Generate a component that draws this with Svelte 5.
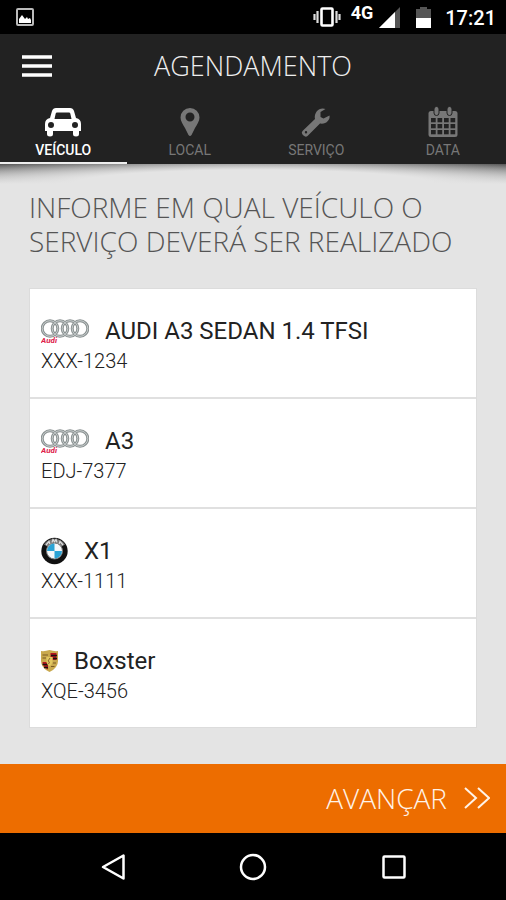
<script>
  const tabs = [
    { id: 'car', label: 'VEÍCULO' },
    { id: 'pin', label: 'LOCAL' },
    { id: 'wrench', label: 'SERVIÇO' },
    { id: 'calendar', label: 'DATA' }
  ];
  const vehicles = [
    { brand: 'audi', name: 'AUDI A3 SEDAN 1.4 TFSI', plate: 'XXX-1234' },
    { brand: 'audi', name: 'A3', plate: 'EDJ-7377' },
    { brand: 'bmw', name: 'X1', plate: 'XXX-1111' },
    { brand: 'porsche', name: 'Boxster', plate: 'XQE-3456' }
  ];
  const columns = [3, 9.5, 16, 22.5];
  const lines = [12, 18, 24];
  const rings = [9, 19, 29, 39];
  let active = $state('car');
</script>

<div class="screen">
  <div class="status">
    <svg class="picture" width="18" height="18" viewBox="0 0 18 18" aria-hidden="true">
      <rect x="1" y="1" width="16" height="16" rx="1" fill="none" stroke="#bbb" stroke-width="2" />
      <path d="M3 15V11L6 7L9 11L11 9L12 11L14 10L15 12V15Z" fill="#fff" />
    </svg>
    <div class="indicators">
      <svg width="28" height="20" viewBox="0 0 28 20" aria-hidden="true">
        <rect x="8.5" y="1.5" width="11" height="17" rx="1" fill="none" stroke="#fff" stroke-width="2.6" />
        <path d="M4.5 4V16M1.5 7V13M23.5 4V16M26.5 7V13" stroke="#ddd" stroke-width="2.2" />
      </svg>
      <span class="network">4G</span>
      <svg class="signal" width="22" height="21" viewBox="0 0 22 21" aria-hidden="true">
        <path d="M0 21L21 0V21Z" fill="#555" />
        <path d="M0 21L16 5V21Z" fill="#fff" />
      </svg>
      <svg class="battery" width="15" height="21" viewBox="0 0 15 21" aria-hidden="true">
        <path d="M0 2H4V0H11V2H15V11H0Z" fill="#555" />
        <path d="M0 11H15V21H0Z" fill="#fff" />
      </svg>
      <span class="clock">17:21</span>
    </div>
  </div>

  <header>
    <div class="bar">
      <button class="menu" aria-label="Menu">
        <svg width="30" height="22" viewBox="0 0 30 22">
          <path d="M0 2H30M0 11H30M0 20H30" stroke="#fff" stroke-width="3.6" />
        </svg>
      </button>
      <h1>AGENDAMENTO</h1>
    </div>
    <nav>
      {#each tabs as tab}
        <button class="tab" class:active={active === tab.id} onclick={() => (active = tab.id)}>
          {#if tab.id === 'car'}
            <svg width="36" height="32" viewBox="0 0 36 32" fill="currentColor">
              <path fill-rule="evenodd" d="M11 2H25Q28 2 29 5L31 12Q36 13 36 18V25H34V28Q34 30.500 31 30.500Q28 30.500 28 28V25H8V28Q8 30.500 5 30.500Q2 30.500 2 28V25H0V18Q0 13 5 12L7 5Q8 2 11 2ZM12 6.500Q11 6.500 10.700 7.500L9.500 13H26.500L25.300 7.500Q25 6.500 24 6.500ZM6 16A3 3 0 1 0 6 22A3 3 0 1 0 6 16ZM30 16A3 3 0 1 0 30 22A3 3 0 1 0 30 16Z" />
            </svg>
          {:else if tab.id === 'pin'}
            <svg width="20" height="32" viewBox="0 0 20 32" fill="currentColor">
              <path fill-rule="evenodd" d="M10 2A9.500 9.500 0 0 1 19.500 11.500C19.500 15 17 18.500 15 22L11.500 29Q10 31 8.500 29L5 22C3 18.500 .5 15 .5 11.500A9.500 9.500 0 0 1 10 2ZM10 6.500A4.500 4.500 0 1 0 10 15.500A4.500 4.500 0 1 0 10 6.500Z" />
            </svg>
          {:else if tab.id === 'wrench'}
            <svg width="30" height="32" viewBox="0 0 30 32" fill="currentColor">
              <path fill-rule="evenodd" d="M24.500 3L19.500 6V11L22.500 12.500L28.500 9.500C29.500 14 25 18.500 19 17.500L6.500 30Q4.500 31.500 2.500 29.500L1.500 28.500Q0 26.500 1.500 25L14 13C12.500 6 19 .5 24.500 3ZM5 25A1.200 1.200 0 1 0 5 27.400A1.200 1.200 0 1 0 5 25Z" />
            </svg>
          {:else}
            <svg width="30" height="32" viewBox="0 0 30 32" fill="currentColor">
              <path d="M3 5H27Q29.500 5 29.500 7.500V28.500Q29.500 31 27 31H3Q.5 31 .5 28.500V7.500Q.5 5 3 5Z" />
              <rect x="6" y="0.5" width="5" height="9" rx="2.500" fill="currentColor" stroke="#222" />
              <rect x="19" y="0.5" width="5" height="9" rx="2.500" fill="currentColor" stroke="#222" />
              {#each lines as y}
                {#each columns as x}
                  <rect {x} {y} width="4.700" height="4.300" fill="#222" />
                {/each}
              {/each}
            </svg>
          {/if}
          <span>{tab.label}</span>
        </button>
      {/each}
    </nav>
  </header>

  <main>
    <h2>INFORME EM QUAL VEÍCULO O SERVIÇO DEVERÁ SER REALIZADO</h2>
    <ul>
      {#each vehicles as vehicle}
        <li>
          <button class="vehicle">
            <span class="model">
              {#if vehicle.brand === 'audi'}
                <svg width="48" height="28" viewBox="0 0 48 28" aria-label="Audi">
                  <g fill="none" stroke="#8b9292" stroke-width="3">
                    {#each rings as cx}
                      <circle {cx} cy="11.500" r="7.800" />
                    {/each}
                  </g>
                  <g fill="none" stroke="#c6cccc" stroke-width="1">
                    {#each rings as cx}
                      <circle {cx} cy="11.500" r="7.800" />
                    {/each}
                  </g>
                  <text x="0" y="26" class="wordmark">Audi</text>
                </svg>
              {:else if vehicle.brand === 'bmw'}
                <svg width="27" height="28" viewBox="0 0 27 28" aria-label="BMW">
                  <circle cx="13.500" cy="14" r="13.200" fill="#111" />
                  <path d="M3 7.500A12.500 12.500 0 0 1 24 7.500L20 10A8 8 0 0 0 7 10Z" fill="#777" />
                  <path d="M5 8L8 4.500L9 7M11 5.500L12 2.500L13.500 5L15 2.500L16 5.500M18 7L19 4.500L22 8" fill="none" stroke="#ddd" stroke-width="1.200" />
                  <circle cx="13.500" cy="14" r="8" fill="#f6f8fa" stroke="#777" />
                  <path d="M13.500 14V6.500A7.500 7.500 0 0 0 6 14ZM13.500 14V21.500A7.500 7.500 0 0 0 21 14Z" fill="#2ba3d5" />
                </svg>
              {:else}
                <svg width="17" height="28" viewBox="0 0 17 28" aria-label="Porsche">
                  <path d="M0 4Q4 4.500 8.500 3Q13 4.500 17 4V14Q17 21 8.500 25Q0 21 0 14Z" fill="#c9a94e" />
                  <path d="M9.500 6H15.500V13H11.500V10H9.500ZM1.500 15H5.500L7 18V22.500Q1.500 20 1.500 15Z" fill="#b3161d" />
                  <path d="M1.500 8H7M1.500 11H5M12 16H15M10 19.500H13.500" stroke="#7a5a22" stroke-width="1.200" />
                  <path d="M10 8.500H16M1.500 17.500H7M12 11.500H16M3 20.500H7" stroke="#1c1512" stroke-width="1.500" />
                  <path d="M5.500 10H11.500V15Q11 18 8.500 19Q6 18 5.500 15Z" fill="#e2c860" />
                  <path d="M9 11L7 14L8.500 15L7.500 17" fill="none" stroke="#8a6a30" />
                </svg>
              {/if}
              <span>{vehicle.name}</span>
            </span>
            <span class="plate">{vehicle.plate}</span>
          </button>
        </li>
      {/each}
    </ul>
  </main>

  <button class="next">
    <span>AVANÇAR</span>
    <svg width="26" height="22" viewBox="0 0 26 22" fill="none" stroke="#fff3e8" stroke-width="2">
      <path d="M1 1L12 11L1 21M14 1L25 11L14 21" />
    </svg>
  </button>

  <div class="system">
    <button aria-label="Voltar">
      <svg width="28" height="28" viewBox="0 0 28 28"><path d="M5 14L25.500 2.500V25.500Z" /></svg>
    </button>
    <button aria-label="Início">
      <svg width="28" height="28" viewBox="0 0 28 28"><circle cx="14" cy="14" r="12" /></svg>
    </button>
    <button aria-label="Recentes">
      <svg width="28" height="28" viewBox="0 0 28 28"><rect x="3.500" y="3.500" width="21" height="21" rx="1" /></svg>
    </button>
  </div>
</div>

<style>
  :global(body) {
    margin: 0;
  }
  .screen {
    display: flex;
    flex-direction: column;
    min-height: 100vh;
    background: #e4e4e4;
    font-family: Roboto, "Noto Sans", sans-serif;
  }
  button {
    margin: 0;
    padding: 0;
    border: 0;
    background: none;
    color: inherit;
    font: inherit;
    cursor: pointer;
  }
  svg {
    display: block;
    flex: none;
  }
  .status {
    display: flex;
    align-items: center;
    justify-content: space-between;
    height: 34px;
    padding: 0 10px 0 16px;
    background: #000;
    color: #fff;
  }
  .indicators {
    display: flex;
    align-items: center;
  }
  .network {
    margin: 0 6px 8px 10px;
    font-size: 18px;
    line-height: 20px;
    font-weight: 700;
  }
  .battery {
    margin: 0 14px 0 15px;
  }
  .clock {
    padding-top: 2px;
    font-size: 20px;
    font-weight: 500;
    line-height: 24px;
  }
  header {
    background: #222;
    color: #fff;
  }
  .bar {
    display: grid;
    grid-template-columns: 60px 1fr 60px;
    align-items: center;
    height: 64px;
  }
  .menu {
    padding: 8px 8px 8px 22px;
  }
  h1 {
    margin: 0;
    text-align: center;
    font: 300 27px/36px "Open Sans", sans-serif;
    color: #eee;
  }
  nav {
    display: flex;
  }
  .tab {
    flex: 1;
    display: flex;
    flex-direction: column;
    align-items: center;
    gap: 3px;
    padding: 8px 0 3px;
    border-bottom: 2px solid transparent;
    color: #777;
    font-size: 14px;
    line-height: 18px;
  }
  .tab.active {
    border-color: #eee;
    color: #fff;
    font-weight: 500;
  }
  main {
    flex: 1;
    padding: 26px 29px 36px;
    background:
      radial-gradient(ellipse at 50% 100%, #e4e4e4 50%, transparent 100%) top / 100% 20px no-repeat,
      linear-gradient(#555, #e4e4e4) top / 100% 20px no-repeat,
      #e4e4e4;
  }
  h2 {
    margin: 0 0 30px;
    font: 300 28px/34px "Open Sans", sans-serif;
    color: #555;
  }
  ul {
    margin: 0;
    padding: 0;
    border: 1px solid #dcdcdc;
    background: #fff;
    list-style: none;
  }
  li + li {
    border-top: 2px solid #e0e0e0;
  }
  .vehicle {
    display: block;
    width: 100%;
    padding: 28px 11px 24px;
    text-align: left;
    color: #222;
  }
  .model {
    display: flex;
    align-items: center;
    gap: 16px;
    font-size: 24px;
    line-height: 28px;
  }
  .plate {
    display: block;
    margin-top: 4px;
    font-size: 20px;
    font-weight: 300;
    line-height: 24px;
  }
  .wordmark {
    font: italic 700 8px Roboto, sans-serif;
    fill: #e0204a;
  }
  .next {
    display: flex;
    align-items: center;
    justify-content: flex-end;
    gap: 17px;
    height: 69px;
    padding: 0 16px 2px;
    background: #ed6d00;
    color: #fff3e8;
    font: 300 28px/36px "Open Sans", sans-serif;
  }
  .system {
    display: flex;
    justify-content: center;
    gap: 113px;
    padding: 20px 0 19px;
    background: #000;
  }
  .system svg {
    fill: none;
    stroke: #fff;
    stroke-width: 2.5;
    stroke-linejoin: round;
  }
</style>
